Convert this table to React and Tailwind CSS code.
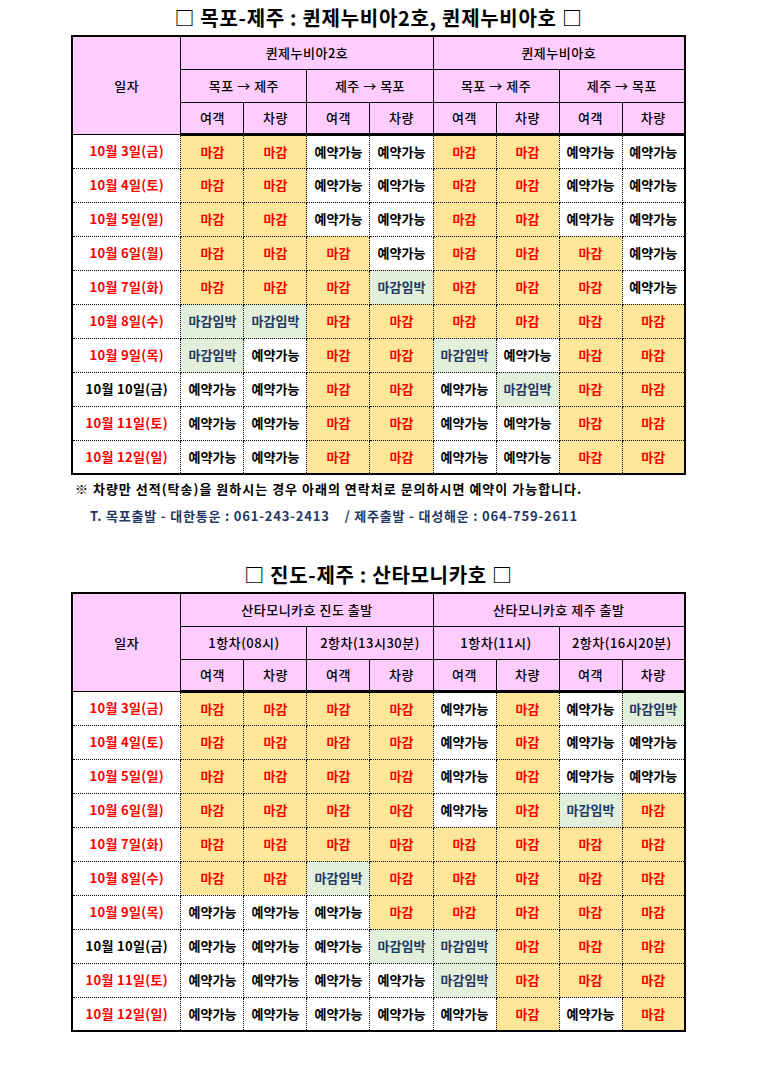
import React from "react";

const M = "마감";
const Y = "예약가능";
const G = "마감임박";

const table1 = {
  title: "□ 목포-제주 : 퀸제누비아2호, 퀸제누비아호 □",
  ships: ["퀸제누비아2호", "퀸제누비아호"],
  legs: ["목포 → 제주", "제주 → 목포", "목포 → 제주", "제주 → 목포"],
  rows: [
    ["10월 3일(금)", true, [M, M, Y, Y, M, M, Y, Y]],
    ["10월 4일(토)", true, [M, M, Y, Y, M, M, Y, Y]],
    ["10월 5일(일)", true, [M, M, Y, Y, M, M, Y, Y]],
    ["10월 6일(월)", true, [M, M, M, Y, M, M, M, Y]],
    ["10월 7일(화)", true, [M, M, M, G, M, M, M, Y]],
    ["10월 8일(수)", true, [G, G, M, M, M, M, M, M]],
    ["10월 9일(목)", true, [G, Y, M, M, G, Y, M, M]],
    ["10월 10일(금)", false, [Y, Y, M, M, Y, G, M, M]],
    ["10월 11일(토)", true, [Y, Y, M, M, Y, Y, M, M]],
    ["10월 12일(일)", true, [Y, Y, M, M, Y, Y, M, M]],
  ],
  solidCol6: [3, 4, 5],
};

const table2 = {
  title: "□ 진도-제주 : 산타모니카호 □",
  ships: ["산타모니카호 진도 출발", "산타모니카호 제주 출발"],
  legs: ["1항차(08시)", "2항차(13시30분)", "1항차(11시)", "2항차(16시20분)"],
  rows: [
    ["10월 3일(금)", true, [M, M, M, M, Y, M, Y, G]],
    ["10월 4일(토)", true, [M, M, M, M, Y, M, Y, Y]],
    ["10월 5일(일)", true, [M, M, M, M, Y, M, Y, Y]],
    ["10월 6일(월)", true, [M, M, M, M, Y, M, G, M]],
    ["10월 7일(화)", true, [M, M, M, M, M, M, M, M]],
    ["10월 8일(수)", true, [M, M, G, M, M, M, M, M]],
    ["10월 9일(목)", true, [Y, Y, Y, M, M, M, M, M]],
    ["10월 10일(금)", false, [Y, Y, Y, G, G, M, M, M]],
    ["10월 11일(토)", true, [Y, Y, Y, Y, G, M, M, M]],
    ["10월 12일(일)", true, [Y, Y, Y, Y, Y, M, Y, M]],
  ],
  solidCol6: [],
};

function cellStyle(v) {
  if (v === M) return "bg-[#ffe699] text-[#ff0000]";
  if (v === G) return "bg-[#e2efda] text-[#1f3864]";
  return "bg-white text-black";
}

function Schedule({ data }) {
  return (
    <div className="flex flex-col items-center">
      <div className="h-[35px] flex items-center justify-center text-[20px] font-bold leading-none tracking-[0.7px] text-black whitespace-pre">
        {data.title}
      </div>
      <table className="border-collapse border-2 border-solid border-black table-fixed w-[613px]">
        <colgroup>
          <col className="w-[109px]" />
          <col className="w-[63px]" />
          <col className="w-[63px]" />
          <col className="w-[63px]" />
          <col className="w-[63px]" />
          <col className="w-[63px]" />
          <col className="w-[63px]" />
          <col className="w-[63px]" />
          <col className="w-[63px]" />
        </colgroup>
        <thead>
          <tr className="h-[33px]">
            <th
              rowSpan={3}
              className="bg-[#ffccff] border border-solid border-black text-[13px] font-medium tracking-[0.5px] p-0"
            >
              일자
            </th>
            {data.ships.map((s) => (
              <th
                key={s}
                colSpan={4}
                className="bg-[#ffccff] border border-solid border-black text-[13px] font-medium tracking-[0.5px] p-0"
              >
                {s}
              </th>
            ))}
          </tr>
          <tr className="h-[33px]">
            {data.legs.map((l, i) => (
              <th
                key={i}
                colSpan={2}
                className="bg-[#ffccff] border border-solid border-black text-[13px] font-medium tracking-[0.5px] p-0 whitespace-nowrap"
              >
                {l}
              </th>
            ))}
          </tr>
          <tr className="h-[32px]">
            {[0, 1, 2, 3, 4, 5, 6, 7].map((i) => (
              <th
                key={i}
                className={
                  "bg-[#ffccff] border-t border-t-solid border-black border-b-[3px] border-b-double p-0 text-[13px] font-medium tracking-[0.5px] " +
                  (i % 2 === 0
                    ? "border-l border-l-solid border-r border-r-dotted"
                    : "border-l border-l-dotted border-r border-r-solid")
                }
              >
                {i % 2 === 0 ? "여객" : "차량"}
              </th>
            ))}
          </tr>
        </thead>
        <tbody>
          {data.rows.map(([d, red, vals], ri) => (
            <tr key={ri} className="h-[34px]">
              <td
                className={
                  "border border-dotted border-black border-r-solid text-center text-[13px] font-bold tracking-[0.3px] p-0 whitespace-nowrap " +
                  (red ? "text-[#ff0000]" : "text-black")
                }
              >
                {d}
              </td>
              {vals.map((v, ci) => {
                const solid6 = ci === 5 && data.solidCol6.includes(ri);
                return (
                  <td
                    key={ci}
                    className={
                      "border border-dotted border-black text-center text-[13px] font-bold p-0 whitespace-nowrap " +
                      (ci % 2 === 0 ? "border-l-solid " : "border-r-solid ") +
                      (solid6 ? "border-l-solid " : "") +
                      cellStyle(v)
                    }
                  >
                    {v}
                  </td>
                );
              })}
            </tr>
          ))}
        </tbody>
      </table>
    </div>
  );
}

export default function App() {
  return (
    <div className="w-[757px] min-h-[1068px] bg-white font-['Noto_Sans_CJK_KR',sans-serif] text-black">
      <Schedule data={table1} />
      <div className="w-[613px] mx-auto">
        <div className="h-[26px] flex items-center pl-[3px] text-[13px] font-bold leading-none tracking-[1px] whitespace-nowrap">
          ※ 차량만 선적(탁송)을 원하시는 경우 아래의 연락처로 문의하시면 예약이 가능합니다.
        </div>
        <div className="h-[28px] flex items-center pl-[18px] text-[13px] font-bold leading-none tracking-[0.8px] text-[#1f3864] whitespace-pre">
          {"T. 목포출발 - 대한통운 : 061-243-2413    / 제주출발 - 대성해운 : 064-759-2611"}
        </div>
      </div>
      <div className="h-[28px]" />
      <Schedule data={table2} />
    </div>
  );
}
